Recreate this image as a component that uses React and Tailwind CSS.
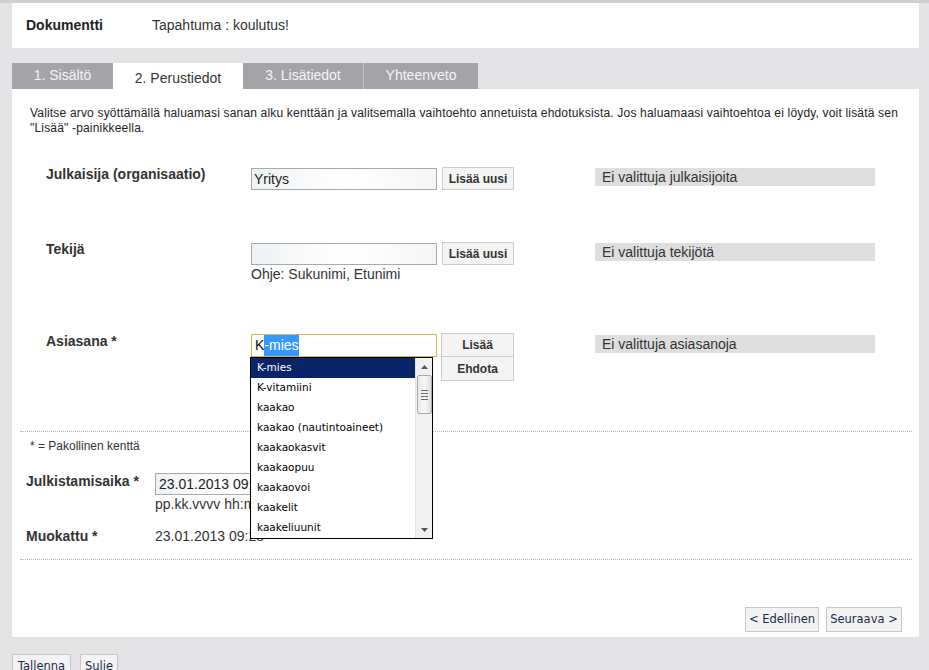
import React from "react";

const arial = { fontFamily: '"Liberation Sans", Arial, sans-serif' };

function Btn({ children, className = "" }) {
  return (
    <div
      className={
        "flex items-center justify-center border border-[#cccccc] bg-[#f4f4f4] text-[12px] font-bold text-[#333333] " +
        className
      }
    >
      {children}
    </div>
  );
}

function TahomaBtn({ children, className = "" }) {
  return (
    <div
      className={
        "flex items-center justify-center border border-[#c8c8c8] bg-[#f3f3f3] text-[11.5px] text-[#1c2c50] " +
        className
      }
      style={{ fontFamily: '"DejaVu Sans", Tahoma, sans-serif' }}
    >
      {children}
    </div>
  );
}

const items = [
  "K-mies",
  "K-vitamiini",
  "kaakao",
  "kaakao (nautintoaineet)",
  "kaakaokasvit",
  "kaakaopuu",
  "kaakaovoi",
  "kaakelit",
  "kaakeliuunit",
];

export default function App() {
  return (
    <div
      className="w-[929px] h-[670px] overflow-hidden bg-[#e3e3e5] border-t-[3px] border-[#cfcfd1] pl-[12px] pr-[10px] text-[#333333]"
      style={arial}
    >
      {/* header */}
      <div className="h-[45px] bg-white flex items-center text-[14px]">
        <div className="w-[140px] pl-[14px] font-bold text-[#222]">Dokumentti</div>
        <div>Tapahtuma : koulutus!</div>
      </div>

      {/* tabs */}
      <div className="mt-[15px] h-[26px] flex text-[14px]">
        <div className="w-[101px] bg-[#a4a4a8] text-[#f4f4f4] flex items-center justify-center pb-[2px]">1. Sisältö</div>
        <div className="w-[130px] bg-white text-[#333] flex items-center justify-center pt-[4px]">2. Perustiedot</div>
        <div className="w-[120px] bg-[#a4a4a8] text-[#f4f4f4] flex items-center justify-center pb-[2px]">3. Lisätiedot</div>
        <div className="w-px bg-[#c4c4c8]"></div>
        <div className="w-[114px] bg-[#a4a4a8] text-[#f4f4f4] flex items-center justify-center pb-[2px]">Yhteenveto</div>
      </div>

      {/* content */}
      <div className="relative h-[548px] bg-white">
        <div className="pt-[17px] pl-[18px] pr-[20px] text-[12px] tracking-[0.18px] leading-[15px] text-[#222]">
          Valitse arvo syöttämällä haluamasi sanan alku kenttään ja valitsemalla vaihtoehto annetuista ehdotuksista. Jos haluamaasi vaihtoehtoa ei löydy, voit lisätä sen "Lisää" -painikkeella.
        </div>

        {/* row 1 */}
        <div className="mt-[31px] flex items-start pl-[34px]">
          <div className="w-[205px] text-[14px] leading-[14px] font-bold">Julkaisija (organisaatio)</div>
          <div className="mt-[1px] w-[186px] h-[22px] border border-[#a9a9a9] bg-gradient-to-r from-[#eef2f4] via-white to-[#f3f5f7] text-[14px] flex items-center pl-[2px] text-[#222]">
            Yritys
          </div>
          <Btn className="ml-[5px] w-[72px] h-[23px]">Lisää uusi</Btn>
          <div className="ml-[81px] mt-[1px] w-[280px] h-[18px] bg-[#dedede] text-[14px] leading-[18px] pl-[7px]">
            Ei valittuja julkaisijoita
          </div>
        </div>

        {/* row 2 */}
        <div className="mt-[52px] flex items-start pl-[34px]">
          <div className="w-[205px] text-[14px] leading-[14px] font-bold">Tekijä</div>
          <div className="flex flex-col">
            <div className="mt-[1px] w-[186px] h-[22px] border border-[#a9a9a9] bg-gradient-to-r from-[#eef2f4] via-white to-[#f3f5f7]"></div>
            <div className="mt-[1px] text-[14px] leading-[16px]">Ohje: Sukunimi, Etunimi</div>
          </div>
          <Btn className="ml-[5px] w-[72px] h-[23px]">Lisää uusi</Btn>
          <div className="ml-[81px] mt-[1px] w-[280px] h-[18px] bg-[#dedede] text-[14px] leading-[18px] pl-[7px]">
            Ei valittuja tekijötä
          </div>
        </div>

        {/* row 3 */}
        <div className="mt-[51px] flex items-start pl-[34px]">
          <div className="w-[205px] text-[14px] leading-[14px] font-bold mt-[1px]">Asiasana *</div>
          <div className="relative">
            <div className="mt-[1px] w-[186px] h-[23px] border border-[#e0b050] bg-white text-[14px] flex items-center pl-[3px] text-[#111]">
              K<span className="bg-[#3399ff] text-white">-mies</span>
            </div>
            {/* autocomplete list */}
            <div
              className="absolute left-[-1px] top-[24px] w-[183px] h-[182px] border border-black bg-white flex z-10"
              style={{ fontFamily: '"DejaVu Sans", Tahoma, sans-serif' }}
            >
              <div className="flex-1 flex flex-col">
                {items.map((it, i) => (
                  <div
                    key={it}
                    className={
                      "h-[20px] flex items-center pl-[6px] text-[10.5px] " +
                      (i === 0 ? "bg-[#0a246a] text-white" : "text-black")
                    }
                  >
                    {it}
                  </div>
                ))}
              </div>
              <div className="w-[17px] bg-[#f0f0f0] flex flex-col items-center border-l border-[#e4e4e4]">
                <div className="h-[17px] flex items-center justify-center">
                  <svg width="7" height="4" viewBox="0 0 7 4">
                    <path d="M0 4 L3.5 0 L7 4 Z" fill="#555" />
                  </svg>
                </div>
                <div className="w-[15px] h-[39px] rounded-[2px] border border-[#a8a8a8] bg-gradient-to-r from-[#e8e8e8] via-[#f8f8f8] to-[#dcdcdc] flex flex-col items-center justify-center gap-[2px]">
                  <div className="w-[7px] h-px bg-[#666]"></div>
                  <div className="w-[7px] h-px bg-[#666]"></div>
                  <div className="w-[7px] h-px bg-[#666]"></div>
                  <div className="w-[7px] h-px bg-[#666]"></div>
                </div>
                <div className="flex-1"></div>
                <div className="h-[17px] flex items-center justify-center">
                  <svg width="7" height="4" viewBox="0 0 7 4">
                    <path d="M0 0 L7 0 L3.5 4 Z" fill="#555" />
                  </svg>
                </div>
              </div>
            </div>
          </div>
          <div className="ml-[4px] flex flex-col">
            <Btn className="w-[73px] h-[24px]">Lisää</Btn>
            <Btn className="w-[73px] h-[24px] border-t-0">Ehdota</Btn>
          </div>
          <div className="ml-[81px] mt-[2px] w-[280px] h-[18px] bg-[#dedede] text-[14px] leading-[18px] pl-[7px]">
            Ei valittuja asiasanoja
          </div>
        </div>

        {/* divider */}
        <div className="mt-[50px] ml-[8px] mr-[7px] border-t border-dotted border-[#b8b8b8]"></div>

        <div className="mt-[7px] pl-[18px] text-[12px] leading-[15px]">* = Pakollinen kenttä</div>

        <div className="mt-[19px] flex items-start pl-[14px]">
          <div className="w-[129px] text-[14px] leading-[16px] font-bold">Julkistamisaika *</div>
          <div className="flex flex-col">
            <div className="w-[130px] h-[22px] border border-[#a9a9a9] bg-gradient-to-r from-[#eef2f4] via-white to-[#f3f5f7] text-[14px] flex items-center pl-[3px] text-[#222]">
              23.01.2013 09:28
            </div>
            <div className="text-[14px] leading-[16px] mt-[1px]">pp.kk.vvvv hh:mm</div>
          </div>
        </div>

        <div className="mt-[16px] flex items-start pl-[14px]">
          <div className="w-[129px] text-[14px] leading-[16px] font-bold">Muokattu *</div>
          <div className="text-[14px] leading-[16px]">23.01.2013 09:28</div>
        </div>

        <div className="mt-[15px] ml-[8px] mr-[7px] border-t border-dotted border-[#b8b8b8]"></div>

        <div className="mt-[47px] flex justify-end gap-[7px] pr-[17px]">
          <TahomaBtn className="w-[74px] h-[25px]">&lt; Edellinen</TahomaBtn>
          <TahomaBtn className="w-[76px] h-[25px]">Seuraava &gt;</TahomaBtn>
        </div>
      </div>

      {/* bottom buttons */}
      <div className="mt-[17px] flex gap-[9px]">
        <TahomaBtn className="w-[59px] h-[25px]">Tallenna</TahomaBtn>
        <TahomaBtn className="w-[38px] h-[25px]">Sulje</TahomaBtn>
      </div>
    </div>
  );
}
